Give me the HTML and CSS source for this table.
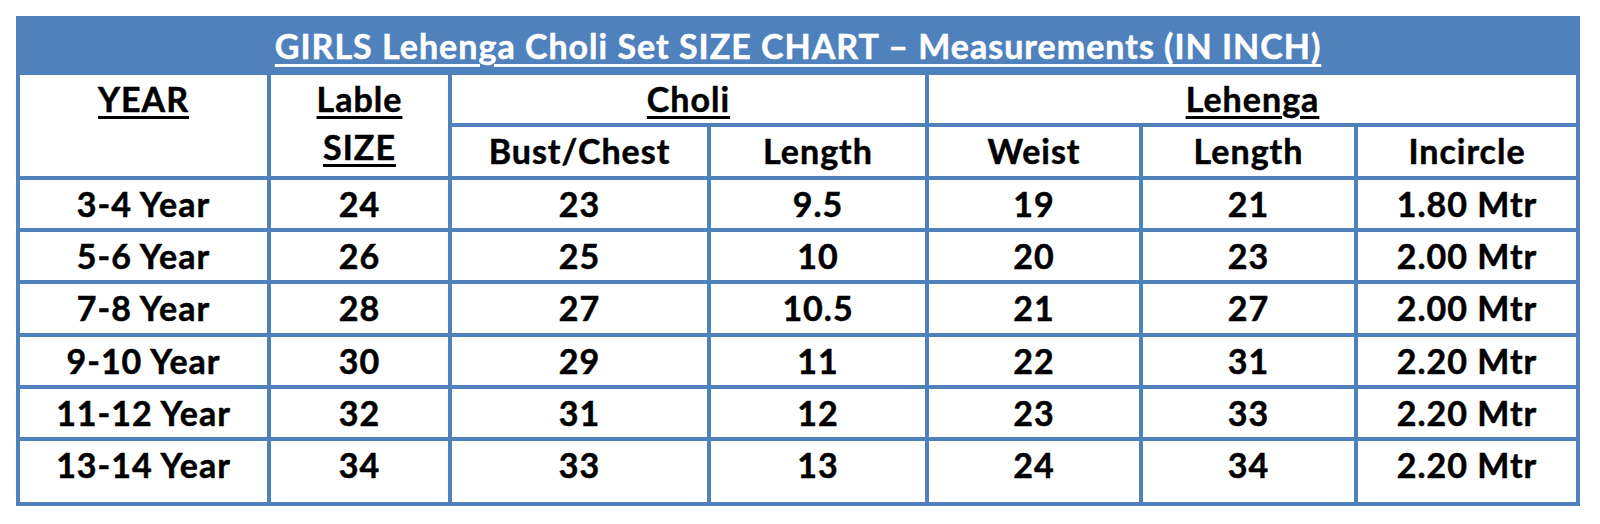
FILE: index.html
```html
<!DOCTYPE html>
<html lang="en">
<head>
<meta charset="utf-8">
<title>GIRLS Lehenga Choli Set SIZE CHART</title>
<link rel="stylesheet" href="styles.css">
</head>
<body>
<table class="chart">
  <colgroup>
    <col class="c-year">
    <col class="c-label">
    <col class="c-bust">
    <col class="c-clen">
    <col class="c-weist">
    <col class="c-llen">
    <col class="c-inc">
  </colgroup>
  <thead>
    <tr class="title-row">
      <th colspan="7" class="title"><span class="u">GIRLS Lehenga Choli Set SIZE CHART – Measurements (IN INCH)</span></th>
    </tr>
    <tr class="head-row">
      <th rowspan="2" class="tall"><span class="u">YEAR</span></th>
      <th rowspan="2" class="tall"><span class="u">Lable</span><br><span class="u">SIZE</span></th>
      <th colspan="2"><span class="u">Choli</span></th>
      <th colspan="3"><span class="u">Lehenga</span></th>
    </tr>
    <tr class="sub-row">
      <th>Bust/Chest</th>
      <th>Length</th>
      <th>Weist</th>
      <th>Length</th>
      <th>Incircle</th>
    </tr>
  </thead>
  <tbody>
    <tr><td>3-4 Year</td><td>24</td><td>23</td><td>9.5</td><td>19</td><td>21</td><td>1.80 Mtr</td></tr>
    <tr><td>5-6 Year</td><td>26</td><td>25</td><td>10</td><td>20</td><td>23</td><td>2.00 Mtr</td></tr>
    <tr class="r49"><td>7-8 Year</td><td>28</td><td>27</td><td>10.5</td><td>21</td><td>27</td><td>2.00 Mtr</td></tr>
    <tr><td>9-10 Year</td><td>30</td><td>29</td><td>11</td><td>22</td><td>31</td><td>2.20 Mtr</td></tr>
    <tr><td>11-12 Year</td><td>32</td><td>31</td><td>12</td><td>23</td><td>33</td><td>2.20 Mtr</td></tr>
    <tr class="last"><td>13-14 Year</td><td>34</td><td>33</td><td>13</td><td>24</td><td>34</td><td>2.20 Mtr</td></tr>
  </tbody>
</table>
</body>
</html>
```
FILE: styles.css
```css
html, body {
  margin: 0;
  padding: 0;
  background: #ffffff;
}

body {
  font-family: Lato, "Liberation Sans", sans-serif;
  font-weight: 700;
  color: #000000;
}

.chart {
  margin: 16px 0 0 16px;
  width: 1564px;
  table-layout: fixed;
  border-collapse: separate;
  border-spacing: 4px;
  background: #4f81bd;
}

.c-year  { width: 247px; }
.c-label { width: 177px; }
.c-bust  { width: 255px; }
.c-clen  { width: 214px; }
.c-weist { width: 210px; }
.c-llen  { width: 211px; }
.c-inc   { width: 218px; }

.chart th,
.chart td {
  padding: 0;
  background: #ffffff;
  font-size: 34px;
  font-weight: 700;
  letter-spacing: 1px;
  -webkit-text-stroke: 0.5px currentColor;
  line-height: 48px;
  height: 48px;
  text-align: center;
  vertical-align: top;
  white-space: nowrap;
}

.chart .title {
  background: #4f81bd;
  color: #ffffff;
  height: 51px;
  line-height: 51px;
  font-size: 34px;
  letter-spacing: 1px;
}

.chart .sub-row th {
  height: 49px;
}

.chart .tall {
  height: auto;
}

.chart .r49 td {
  height: 49px;
}

.chart .last td {
  height: 61px;
}

.u {
  text-decoration: underline;
  text-decoration-thickness: 3px;
  text-underline-offset: 4px;
}

.title .u {
  text-underline-offset: 5px;
}
```
